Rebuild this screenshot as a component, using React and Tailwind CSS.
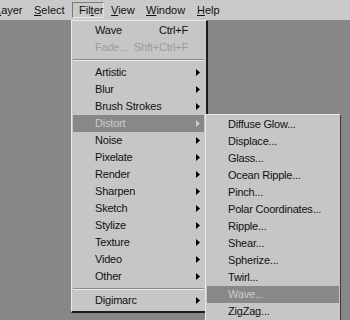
import React from "react";

const Arrow = ({ light }) => (
  <svg width="4" height="7" viewBox="0 0 4 7" className="shrink-0">
    <path d="M0 0L4 3.5L0 7Z" fill={light ? "#cacaca" : "#000"} />
  </svg>
);

function Row({ label, shortcut, arrow, disabled, active, pl = "pl-[22px]" }) {
  const tone = active
    ? "bg-[#888888] text-[#cbcbcb]"
    : disabled
    ? "text-[#9c9c9c]"
    : "text-[#111111]";
  return (
    <div className={`h-[17px] flex items-center pr-[4px] whitespace-nowrap ${pl} ${tone}`}>
      <span className="flex-1">{label}</span>
      {shortcut && <span className="mr-[12px]">{shortcut}</span>}
      {arrow && <Arrow light={active} />}
    </div>
  );
}

const Sep = ({ cls }) => (
  <div className={`h-[2px] border-t border-t-[#8a8a8a] border-b border-b-[#ececec] ${cls}`} />
);

export default function App() {
  const items = [
    "Artistic",
    "Blur",
    "Brush Strokes",
    "Distort",
    "Noise",
    "Pixelate",
    "Render",
    "Sharpen",
    "Sketch",
    "Stylize",
    "Texture",
    "Video",
    "Other",
  ];
  const sub = [
    "Diffuse Glow...",
    "Displace...",
    "Glass...",
    "Ocean Ripple...",
    "Pinch...",
    "Polar Coordinates...",
    "Ripple...",
    "Shear...",
    "Spherize...",
    "Twirl...",
    "Wave...",
    "ZigZag...",
  ];
  return (
    <div className="relative w-[350px] h-[320px] overflow-hidden bg-[#878787] font-['Liberation_Sans',Arial,sans-serif] text-[11px] tracking-[-0.2px] text-[#111111] leading-none">
      <div className="h-[20px] bg-[#cacaca] flex items-center whitespace-nowrap tracking-normal">
        <span className="w-[39px] ml-[-5px] shrink-0">
          <u>L</u>ayer
        </span>
        <span className="w-[38px] shrink-0">
          <u>S</u>elect
        </span>
        <span className="w-[32px] h-[16px] shrink-0 flex items-center pl-[6px] border border-t-[#7c7c7c] border-l-[#7c7c7c] border-b-[#e6e6e6] border-r-[#e6e6e6]">
          Fil<u>t</u>er
        </span>
        <span className="w-[42px] pl-[7px] shrink-0">
          <u>V</u>iew
        </span>
        <span className="w-[51px] shrink-0">
          <u>W</u>indow
        </span>
        <span className="shrink-0">
          <u>H</u>elp
        </span>
      </div>

      <div className="absolute left-[71px] top-[20px] w-[137px] bg-[#c6c6c6] border-l border-t border-l-[#e9e9e9] border-t-[#e9e9e9] border-r-2 border-b-2 border-r-[#1c1c1c] border-b-[#1c1c1c] pt-[1px] pb-[2px] pl-[1px] pr-[2px]">
        <Row label="Wave" shortcut="Ctrl+F" />
        <Row label="Fade..." shortcut="Shft+Ctrl+F" disabled />
        <Sep cls="my-[3px]" />
        {items.map((l) => (
          <Row key={l} label={l} arrow active={l === "Distort"} />
        ))}
        <Sep cls="mt-[3px] mb-[2px]" />
        <Row label="Digimarc" arrow />
      </div>

      <div className="absolute left-[205px] top-[114px] w-[136px] h-[220px] bg-[#c6c6c6] border-l border-t border-l-[#e9e9e9] border-t-[#e9e9e9] border-r border-r-[#3a3a3a] pt-[1px] pl-[1px] pr-[1px]">
        {sub.map((l) => (
          <Row key={l} label={l} pl="pl-[21px]" active={l === "Wave..."} />
        ))}
      </div>
    </div>
  );
}
